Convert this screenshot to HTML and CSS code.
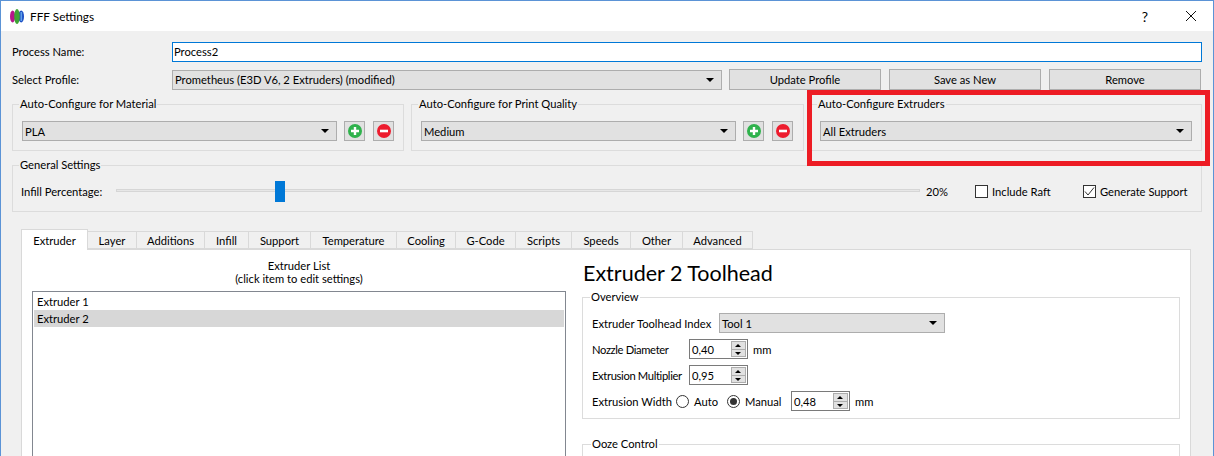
FILE: index.html
```html
<!DOCTYPE html>
<html lang="en">
<head>
    <meta charset="UTF-8">
    <title>FFF Settings</title>
    <link rel="stylesheet" href="styles.css">
</head>
<body>
    <div class="window">
        <header class="titleBar">
            <svg class="logo" width="14" height="15" viewBox="0 0 14 15">
                <ellipse cx="2.6" cy="7.5" rx="2.6" ry="6" fill="#b5178a"/>
                <ellipse cx="11.2" cy="7.5" rx="2.8" ry="6" fill="#1c4fc4"/>
                <rect x="10.5" y="3" width="1.6" height="9" fill="#5fa0e8"/>
                <ellipse cx="7" cy="7.5" rx="2.8" ry="7.5" fill="#3fa535"/>
            </svg>
            <span class="titleText">FFF Settings</span>
            <span class="help">?</span>
            <svg class="close" width="12" height="12" viewBox="0 0 12 12">
                <path d="M1 1L11 11M11 1L1 11" stroke="#111" stroke-width="1" fill="none"/>
            </svg>
        </header>

        <main class="content">
            <div class="nameRow">
                <label>Process Name:</label>
                <div class="nameInput">Process2</div>
            </div>

            <div class="profileRow">
                <label>Select Profile:</label>
                <div class="combo profileCombo"><span>Prometheus (E3D V6, 2 Extruders) (modified)</span><i class="arrow"></i></div>
                <button class="btn">Update Profile</button>
                <button class="btn">Save as New</button>
                <button class="btn">Remove</button>
            </div>

            <div class="autoRow">
                <fieldset class="group">
                    <legend>Auto-Configure for Material</legend>
                    <div class="comboRow">
                        <div class="combo grow"><span>PLA</span><i class="arrow"></i></div>
                        <button class="iconBtn">
                            <svg width="16" height="16" viewBox="0 0 16 16"><circle cx="8" cy="8" r="7" fill="#2fb24c"/><path d="M8 4v8M4 8h8" stroke="#fff" stroke-width="2.4"/></svg>
                        </button>
                        <button class="iconBtn">
                            <svg width="16" height="16" viewBox="0 0 16 16"><circle cx="8" cy="8" r="7" fill="#ed1c2e"/><path d="M4 8h8" stroke="#fff" stroke-width="2.6"/></svg>
                        </button>
                    </div>
                </fieldset>
                <fieldset class="group qualityGroup">
                    <legend>Auto-Configure for Print Quality</legend>
                    <div class="comboRow">
                        <div class="combo grow"><span>Medium</span><i class="arrow"></i></div>
                        <button class="iconBtn">
                            <svg width="16" height="16" viewBox="0 0 16 16"><circle cx="8" cy="8" r="7" fill="#2fb24c"/><path d="M8 4v8M4 8h8" stroke="#fff" stroke-width="2.4"/></svg>
                        </button>
                        <button class="iconBtn">
                            <svg width="16" height="16" viewBox="0 0 16 16"><circle cx="8" cy="8" r="7" fill="#ed1c2e"/><path d="M4 8h8" stroke="#fff" stroke-width="2.6"/></svg>
                        </button>
                    </div>
                </fieldset>
                <fieldset class="group extrudersGroup">
                    <legend>Auto-Configure Extruders</legend>
                    <div class="comboRow">
                        <div class="combo grow"><span>All Extruders</span><i class="arrow"></i></div>
                    </div>
                </fieldset>
            </div>

            <fieldset class="group generalGroup">
                <legend>General Settings</legend>
                <div class="generalRow">
                    <label class="infillLabel">Infill Percentage:</label>
                    <div class="slider"><div class="sliderHandle"></div></div>
                    <span class="percent">20%</span>
                    <span class="check checkRaft"><i class="box"></i>Include Raft</span>
                    <span class="check"><i class="box">
                        <svg width="11" height="11" viewBox="0 0 11 11"><path d="M1 5.5L4 9L10 1.5" stroke="#333" stroke-width="1" fill="none"/></svg>
                    </i>Generate Support</span>
                </div>
            </fieldset>

            <nav class="tabs">
                <span class="tab active">Extruder</span>
                <span class="tab w49">Layer</span>
                <span class="tab w68">Additions</span>
                <span class="tab w44">Infill</span>
                <span class="tab w62">Support</span>
                <span class="tab w86">Temperature</span>
                <span class="tab w59">Cooling</span>
                <span class="tab w60">G-Code</span>
                <span class="tab w56">Scripts</span>
                <span class="tab w59">Speeds</span>
                <span class="tab w52">Other</span>
                <span class="tab w70">Advanced</span>
            </nav>

            <section class="tabPane">
                <div class="listCol">
                    <div class="listTitle">Extruder List<br>(click item to edit settings)</div>
                    <ul class="list">
                        <li>Extruder 1</li>
                        <li class="selected">Extruder 2</li>
                    </ul>
                </div>
                <div class="detailCol">
                    <h2>Extruder 2 Toolhead</h2>
                    <fieldset class="group overview">
                        <legend>Overview</legend>
                        <div class="detailRow">
                            <label class="toolLabel">Extruder Toolhead Index</label>
                            <div class="combo toolCombo"><span>Tool 1</span><i class="arrow"></i></div>
                        </div>
                        <div class="detailRow">
                            <label class="spinLabel">Nozzle Diameter</label>
                            <div class="spin"><span>0,40</span><b class="spinBtns"><i class="up"></i><i class="down"></i></b></div>
                            <span class="unit">mm</span>
                        </div>
                        <div class="detailRow">
                            <label class="spinLabel">Extrusion Multiplier</label>
                            <div class="spin"><span>0,95</span><b class="spinBtns"><i class="up"></i><i class="down"></i></b></div>
                        </div>
                        <div class="detailRow">
                            <label class="widthLabel">Extrusion Width</label>
                            <span class="radio"><i class="circle"></i>Auto</span>
                            <span class="radio radioManual"><i class="circle on"></i>Manual</span>
                            <div class="spin"><span>0,48</span><b class="spinBtns"><i class="up"></i><i class="down"></i></b></div>
                            <span class="unit">mm</span>
                        </div>
                    </fieldset>
                    <fieldset class="group ooze">
                        <legend>Ooze Control</legend>
                    </fieldset>
                </div>
            </section>
        </main>

        <div class="highlight"></div>
    </div>
</body>
</html>
```

FILE: styles.css
```css
* {
    box-sizing: border-box;
}

html, body {
    margin: 0;
    padding: 0;
    height: 456px;
    overflow: hidden;
}

body {
    font-family: Lato, Arial, sans-serif;
    font-size: 11.2px;
    color: #000;
    background-color: #f0f0f0;
}

.window {
    position: relative;
    width: 1214px;
    height: 456px;
    overflow: hidden;
    border: 1px solid #5b93d6;
    border-bottom: none;
    background-color: #f0f0f0;
}

.titleBar {
    display: flex;
    align-items: center;
    height: 30px;
    padding-left: 9px;
    background-color: #fff;
}

.titleText {
    margin-left: 6px;
    font-size: 11.8px;
}

.help {
    margin-left: auto;
    margin-right: 37px;
    font-size: 14px;
}

.close {
    margin-right: 16px;
}

.content {
    padding: 11px 11px 0 11px;
}

label {
    display: block;
    white-space: nowrap;
}

.nameRow {
    display: flex;
    align-items: center;
    height: 19px;
}

.nameRow label, .profileRow label {
    width: 160px;
    flex-shrink: 0;
}

.nameInput {
    width: 1030px;
    height: 20px;
    padding-left: 1px;
    line-height: 18px;
    background-color: #fff;
    border: 1px solid #0078d7;
}

.profileRow {
    display: flex;
    align-items: center;
    margin-top: 8px;
    height: 21px;
}

.combo {
    display: flex;
    align-items: center;
    justify-content: space-between;
    height: 20px;
    padding: 0 7px 0 2px;
    background-color: #e1e1e1;
    border: 1px solid #adadad;
}

.arrow {
    width: 0;
    height: 0;
    border-left: 4px solid transparent;
    border-right: 4px solid transparent;
    border-top: 4px solid #000;
}

.profileCombo {
    width: 550px;
    flex-shrink: 0;
    margin-right: 7px;
}

.btn {
    width: 152px;
    height: 21px;
    flex-shrink: 0;
    margin-right: 8px;
    padding: 0;
    font: inherit;
    color: #000;
    background-color: #e1e1e1;
    border: 1px solid #adadad;
}

.btn:last-child {
    margin-right: 0;
}

.autoRow {
    display: flex;
    gap: 7px;
    margin-top: 7px;
}

.group {
    margin: 0;
    min-width: 0;
    border: 1px solid #dcdcdc;
    padding: 0;
}

.group legend {
    padding: 0 1px;
    line-height: 14px;
}

.autoRow .group {
    flex: 1;
    height: 54px;
    padding: 10px 9px 0 9px;
}

.autoRow .group legend {
    margin-left: -3px;
}

.autoRow .qualityGroup {
    padding-right: 10px;
}

.autoRow .extrudersGroup {
    padding-left: 8px;
}

.autoRow .extrudersGroup legend {
    margin-left: -3px;
}

.comboRow {
    display: flex;
    align-items: center;
}

.grow {
    flex: 1;
}

.iconBtn {
    display: flex;
    align-items: center;
    justify-content: center;
    width: 21px;
    height: 20px;
    margin-left: 7px;
    padding: 0;
    background-color: #e1e1e1;
    border: 1px solid #adadad;
}

.iconBtn + .iconBtn {
    margin-left: 8px;
}

.generalGroup {
    height: 54px;
    margin-top: 7px;
    padding: 9px 9px 0 8px;
}

.generalGroup legend {
    margin-left: -2px;
}

.generalRow {
    display: flex;
    align-items: center;
    height: 21px;
    white-space: nowrap;
}

.infillLabel {
    width: 95px;
    flex-shrink: 0;
}

.slider {
    position: relative;
    width: 804px;
    height: 3px;
    flex-shrink: 0;
    margin-bottom: 2px;
    background-color: #e7e7e7;
    border: 1px solid #d6d6d6;
}

.sliderHandle {
    position: absolute;
    left: 158px;
    top: -9px;
    width: 10px;
    height: 21px;
    background-color: #0078d7;
}

.percent {
    margin-left: 6px;
    width: 49px;
    flex-shrink: 0;
}

.check {
    display: flex;
    align-items: center;
    flex-shrink: 0;
}

.checkRaft {
    width: 108px;
}

.box {
    display: flex;
    align-items: center;
    justify-content: center;
    width: 13px;
    height: 13px;
    margin-right: 4px;
    background-color: #fff;
    border: 1px solid #333;
}

.tabs {
    display: flex;
    align-items: flex-end;
    height: 21px;
    margin-top: 16px;
    margin-left: 9px;
}

.tab {
    display: flex;
    align-items: center;
    justify-content: center;
    height: 18px;
    background-color: #f0f0f0;
    border: 1px solid #d9d9d9;
    border-left: none;
}

.tab.active {
    width: 67px;
    height: 21px;
    margin-bottom: -1px;
    position: relative;
    background-color: #fff;
    border-left: 1px solid #d9d9d9;
    border-bottom: none;
}

.w49 { width: 49px; }
.w68 { width: 68px; }
.w44 { width: 44px; }
.w62 { width: 62px; }
.w86 { width: 86px; }
.w59 { width: 59px; }
.w60 { width: 60px; }
.w56 { width: 56px; }
.w52 { width: 52px; }
.w70 { width: 70px; }

.tabPane {
    display: flex;
    width: 1170px;
    height: 220px;
    margin-left: 9px;
    padding: 9px 11px 0 10px;
    background-color: #fff;
    border: 1px solid #d9d9d9;
}

.listCol {
    width: 534px;
    flex-shrink: 0;
}

.listTitle {
    text-align: center;
    line-height: 13px;
}

.list {
    list-style: none;
    height: 200px;
    margin: 6px 0 0 0;
    padding: 1px;
    border: 1px solid #828790;
}

.list li {
    height: 17px;
    line-height: 17px;
    padding-left: 3px;
}

.list li.selected {
    background-color: #d7d7d7;
}

.detailCol {
    width: 598px;
    flex-shrink: 0;
    margin-left: 16px;
}

h2 {
    margin: 1px 0 0 1px;
    font-size: 21.5px;
    font-weight: 400;
    line-height: 26px;
}

.overview {
    height: 129px;
    margin-top: 4px;
    padding: 9px 9px 0 9px;
}

.overview legend {
    margin-left: -2px;
}

.detailRow {
    display: flex;
    align-items: center;
    height: 20px;
    margin-bottom: 6px;
    white-space: nowrap;
}

.toolLabel {
    width: 127px;
    flex-shrink: 0;
}

.toolCombo {
    width: 226px;
    flex-shrink: 0;
}

.spinLabel {
    width: 97px;
    flex-shrink: 0;
    letter-spacing: -0.35px;
}

.widthLabel {
    width: 84px;
    flex-shrink: 0;
}

.spin {
    display: flex;
    align-items: center;
    justify-content: space-between;
    width: 59px;
    height: 20px;
    flex-shrink: 0;
    padding: 0 1px 0 2px;
    background-color: #fff;
    border: 1px solid #7a7a7a;
}

.spinBtns {
    display: flex;
    flex-direction: column;
    gap: 1px;
    width: 15px;
    height: 16px;
    background-color: #adadad;
    border: 1px solid #adadad;
}

.spinBtns i {
    position: relative;
    flex: 1;
    background-color: #e1e1e1;
}

.spinBtns i::after {
    content: "";
    position: absolute;
    left: 3px;
    top: 2px;
    border-left: 3px solid transparent;
    border-right: 3px solid transparent;
}

.spinBtns .up::after {
    border-bottom: 3px solid #000;
}

.spinBtns .down::after {
    border-top: 3px solid #000;
}

.unit {
    margin-left: 5px;
}

.radio {
    display: flex;
    align-items: center;
    width: 51px;
    flex-shrink: 0;
}

.radioManual {
    width: 64px;
}

.circle {
    position: relative;
    width: 13px;
    height: 13px;
    margin-right: 5px;
    background-color: #fff;
    border: 1px solid #333;
    border-radius: 50%;
}

.circle.on::after {
    content: "";
    position: absolute;
    left: 2px;
    top: 2px;
    width: 7px;
    height: 7px;
    background-color: #333;
    border-radius: 50%;
}

.ooze {
    height: 40px;
    margin-top: 18px;
}

.ooze legend {
    margin-left: 8px;
}

.highlight {
    position: absolute;
    left: 806px;
    top: 89px;
    width: 403px;
    height: 76px;
    border: 5px solid #ed1c24;
}
```
